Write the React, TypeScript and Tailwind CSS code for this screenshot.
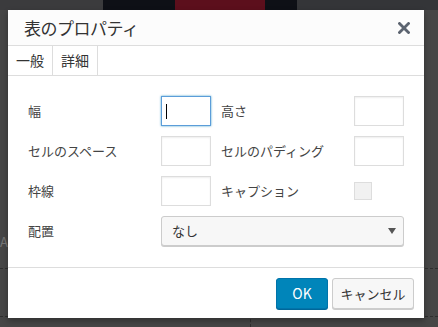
const jp = "font-['Noto_Sans_CJK_JP','Noto_Sans',sans-serif]";

function Field({ focused }: { focused?: boolean }) {
  return (
    <div
      className={`h-[30px] w-[50px] bg-white ${
        focused
          ? 'border border-[#5b9dd9] shadow-[0_0_2px_rgba(30,140,190,0.8)]'
          : 'border border-[#ddd] shadow-[inset_0_1px_2px_rgba(0,0,0,0.07)]'
      } relative`}
    >
      {focused && <span className="absolute left-[4px] top-[7px] h-[15px] w-px bg-black" />}
    </div>
  );
}

function Label({ children }: { children: string }) {
  return <div className="flex h-[30px] items-center text-[13px] text-[#444]">{children}</div>;
}

export default function App() {
  return (
    <div className={`relative h-[327px] w-[438px] overflow-hidden bg-[#464646] ${jp}`}>
      {/* backdrop */}
      <div className="flex h-[10px] w-full">
        <div className="w-[103px] bg-[#3b3b3d]" />
        <div className="flex w-[194px] bg-[#0e1016]">
          <div className="ml-[72px] w-[90px] bg-[#5c0f1c]" />
        </div>
        <div className="flex-1 bg-[#343538]" />
      </div>
      <div className="absolute left-0 right-0 top-[316px] border-t border-dashed border-[#2e2e2e]" />
      <div className="absolute bottom-0 left-[250px] top-[300px] border-l border-dashed border-[#2e2e2e]" />
      <div className="absolute left-0 right-0 top-[268px] border-t border-dashed border-[#2e2e2e]" />
      <div className="absolute left-0 top-[232px] text-[13px] text-[#777]">A</div>

      {/* dialog */}
      <div className="absolute left-[8px] top-[10px] flex h-[308px] w-[416px] flex-col bg-white shadow-[0_3px_6px_rgba(0,0,0,0.3)]">
        <div className="flex h-[36px] items-center justify-between border-b border-[#ddd] bg-[#fcfcfc] pl-[16px] pr-[14px]">
          <span className="text-[17px] tracking-[-0.5px] text-[#333]">表のプロパティ</span>
          <svg width="12" height="12" viewBox="0 0 12 12" className="mt-[1px]">
            <path d="M1.5 1.5 L10.5 10.5 M10.5 1.5 L1.5 10.5" stroke="#5c6470" strokeWidth="2.8" strokeLinecap="square" />
          </svg>
        </div>
        <div className="flex h-[30px] border-b border-[#ddd]">
          <div className="flex w-[45px] items-center justify-center border-r border-[#ddd] text-[14px] text-[#333]">一般</div>
          <div className="flex w-[45px] items-center justify-center border-r border-[#ddd] text-[14px] text-[#333]">詳細</div>
        </div>
        <div className="flex flex-1 flex-col gap-[10px] px-[20px] pt-[20px]">
          <div className="grid grid-cols-[133px_50px_10px_133px_50px] gap-y-[10px]">
            <Label>幅</Label>
            <Field focused />
            <div />
            <Label>高さ</Label>
            <Field />
            <Label>セルのスペース</Label>
            <Field />
            <div />
            <Label>セルのパディング</Label>
            <Field />
            <Label>枠線</Label>
            <Field />
            <div />
            <Label>キャプション</Label>
            <div className="flex h-[30px] items-center">
              <div className="h-[18px] w-[18px] border border-[#ddd] bg-[#f1f1f1]" />
            </div>
          </div>
          <div className="flex">
            <div className="w-[133px]">
              <Label>配置</Label>
            </div>
            <div className="flex h-[30px] flex-1 items-center justify-between rounded-[3px] border border-[#ccc] bg-[#f7f7f7] pl-[10px] pr-[7px] shadow-[0_1px_0_#ccc]">
              <span className="text-[13px] text-[#333]">なし</span>
              <svg width="8" height="6" viewBox="0 0 8 6">
                <path d="M0 0 H8 L4 6 Z" fill="#555" />
              </svg>
            </div>
          </div>
        </div>
        <div className="flex h-[51px] items-start justify-end gap-[4px] border-t border-[#ddd] pr-[10px] pt-[10px]">
          <button className="flex h-[31px] w-[52px] items-center justify-center rounded-[3px] border border-[#0073aa] bg-[#0085ba] text-[14px] text-white shadow-[0_1px_0_#006799]">
            OK
          </button>
          <button className="flex h-[31px] w-[82px] items-center justify-center rounded-[3px] border border-[#ccc] bg-[#f7f7f7] text-[13px] text-[#333] shadow-[0_1px_0_#ccc]">
            キャンセル
          </button>
        </div>
      </div>
    </div>
  );
}
